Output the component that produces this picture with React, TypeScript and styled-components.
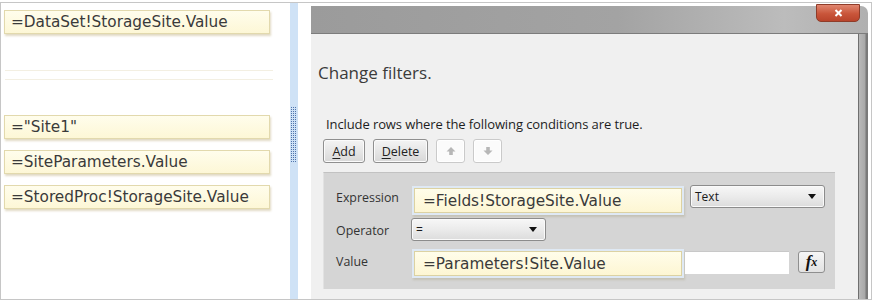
import React from "react";
import styled, { createGlobalStyle } from "styled-components";

const GlobalStyle = createGlobalStyle`
  html, body {
    margin: 0;
    padding: 0;
    background: #ffffff;
  }
  body {
    font-family: "Open Sans", "DejaVu Sans", sans-serif;
  }
`;

const Frame = styled.div`
  display: flex;
  width: 870px;
  height: 296px;
  margin-top: 2px;
  border: 1px solid #c6c6c6;
  background: #ffffff;
  overflow: hidden;
`;

/* ---------- left list of expressions ---------- */

const ListPanel = styled.div`
  display: flex;
  flex-direction: column;
  width: 289px;
  padding: 7px 0 0 3px;
  box-sizing: border-box;
`;

const ExprBox = styled.div<{ $gap?: number }>`
  display: flex;
  align-items: center;
  width: 266px;
  height: 24px;
  margin-top: ${(p) => p.$gap ?? 0}px;
  padding-left: 6px;
  box-sizing: border-box;
  background: linear-gradient(#fffdec, #fdf7d6);
  border: 1px solid #e2d9ad;
  box-shadow: 1px 2px 2px rgba(170, 150, 90, 0.35);
  font-family: "DejaVu Sans", sans-serif;
  font-size: 15.3px;
  color: #3a3a3a;
  white-space: nowrap;
`;

const BlankSlot = styled.div<{ $edge: "top" | "bottom"; $gap: number }>`
  width: 268px;
  height: 34px;
  margin-top: ${(p) => p.$gap}px;
  margin-left: 1px;
  border-${(p) => p.$edge}: 1px solid #f3efe2;
`;

/* ---------- splitter ---------- */

const Splitter = styled.div`
  display: flex;
  flex-direction: column;
  width: 8px;
  background: #cfe2f6;
`;

const Grip = styled.div`
  width: 6px;
  height: 56px;
  margin: 104px 0 0 1px;
  background:
    linear-gradient(90deg, transparent 50%, #cfe2f6 50%) 0 0 / 2px 2px,
    linear-gradient(#4f74ac 50%, #cfe2f6 50%) 0 0 / 2px 2px;
`;

const Gutter = styled.div`
  width: 13px;
`;

/* ---------- dialog ---------- */

const Dialog = styled.div`
  position: relative;
  display: flex;
  flex-direction: column;
  width: 557px;
  margin-top: 3px;
`;

const TitleBar = styled.div`
  height: 28px;
  box-sizing: border-box;
  background: linear-gradient(to right, #9b9b9b 0%, #a3a3a3 55%, #bcbcbc 85%, #b0b0b0 100%);
  border-bottom: 1px solid #7c7c7c;
  border-top-right-radius: 7px;
`;

const CloseButton = styled.div`
  position: absolute;
  top: -2px;
  right: 8px;
  display: flex;
  align-items: center;
  justify-content: center;
  width: 44px;
  height: 18px;
  box-sizing: border-box;
  background: linear-gradient(#e0866f, #c9553a 55%, #b9442b);
  border: 1px solid #8f3c29;
  border-radius: 0 0 5px 5px;
`;

const DialogMain = styled.div`
  display: flex;
  flex: 1;
`;

const DialogBody = styled.div`
  display: flex;
  flex-direction: column;
  flex: 1;
  background: #f0f0f0;
`;

const WindowEdge = styled.div`
  width: 10px;
  background: linear-gradient(
    to right,
    #6f6f6f 0,
    #6f6f6f 1px,
    #b9b9b9 1px,
    #a8a8a8 70%,
    #7a7a7a 80%,
    #7a7a7a 100%
  );
`;

const Heading = styled.div`
  margin: 28px 0 0 7px;
  font-size: 17px;
  line-height: 22px;
  color: #3b3b3b;
`;

const Hint = styled.div`
  margin: 32px 0 0 15px;
  font-size: 13px;
  line-height: 16px;
  letter-spacing: -0.1px;
  color: #1e1e1e;
`;

const Toolbar = styled.div`
  display: flex;
  gap: 8px;
  margin: 7px 0 0 12px;
`;

const ToolButton = styled.div<{ $w: number; $disabled?: boolean }>`
  display: flex;
  align-items: center;
  justify-content: center;
  width: ${(p) => p.$w}px;
  height: 24px;
  box-sizing: border-box;
  border-radius: 3px;
  font-size: 12.5px;
  color: #222;
  border: 1px solid ${(p) => (p.$disabled ? "#cacaca" : "#8f8f8f")};
  background: ${(p) =>
    p.$disabled ? "#fbfbfb" : "linear-gradient(#f4f4f4, #e6e6e6 50%, #d8d8d8)"};
  box-shadow: inset 0 0 0 1px ${(p) => (p.$disabled ? "#ffffff" : "#fbfbfb")};
  u {
    text-decoration: underline;
    text-underline-offset: 2px;
  }
`;

const FilterPanel = styled.div`
  display: flex;
  flex-direction: column;
  height: 117px;
  margin: 9px 23px 0 12px;
  padding: 12px 0 0 12px;
  box-sizing: border-box;
  background: #d5d5d5;
  border-top: 1px solid #c2c2c2;
  border-left: 1px solid #e2e2e2;
`;

const FilterRow = styled.div<{ $h: number; $gap?: number }>`
  display: flex;
  align-items: flex-start;
  height: ${(p) => p.$h}px;
  margin-top: ${(p) => p.$gap ?? 0}px;
`;

const Label = styled.div<{ $top: number }>`
  width: 75px;
  padding-top: ${(p) => p.$top}px;
  font-size: 12.4px;
  color: #333;
`;

const YellowInput = styled.div`
  display: flex;
  align-items: center;
  width: 268px;
  height: 25px;
  margin: 3px 0 0 3px;
  padding-left: 8px;
  box-sizing: border-box;
  background: linear-gradient(#fffdea, #fdf6d3);
  border: 1px solid #dcd2a3;
  box-shadow: 0 0 0 2px #dfe9f4, 1px 2px 2px 2px rgba(160, 150, 110, 0.3);
  font-family: "DejaVu Sans", sans-serif;
  font-size: 15.3px;
  color: #3a3a3a;
  white-space: nowrap;
`;

const Select = styled.div<{ $w: number; $ml: number }>`
  display: flex;
  align-items: center;
  justify-content: space-between;
  width: ${(p) => p.$w}px;
  height: 23px;
  margin-left: ${(p) => p.$ml}px;
  padding: 0 8px 0 4px;
  box-sizing: border-box;
  border: 1px solid #8c8c8c;
  border-radius: 3px;
  background: linear-gradient(#f7f7f7, #ebebeb 50%, #dcdcdc);
  box-shadow: inset 0 0 0 1px #fafafa;
  font-size: 12px;
  color: #1a1a1a;
`;

const Caret = styled.span`
  width: 0;
  height: 0;
  border-left: 4px solid transparent;
  border-right: 4px solid transparent;
  border-top: 5px solid #111;
`;

const PlainBox = styled.div`
  width: 104px;
  height: 22px;
  margin: 3px 0 0 3px;
  background: #ffffff;
  border-top: 1px solid #c8c8c8;
`;

const FxButton = styled.div`
  display: flex;
  align-items: center;
  justify-content: center;
  width: 27px;
  height: 22px;
  margin: 3px 0 0 9px;
  box-sizing: border-box;
  border: 1px solid #8f8f8f;
  border-radius: 3px;
  background: linear-gradient(#f6f6f6, #e2e2e2);
  font-family: "Liberation Serif", serif;
  font-style: italic;
  font-weight: bold;
  font-size: 17px;
  color: #111;
  small {
    font-size: 12px;
  }
`;

const Arrow = ({ down }: { down?: boolean }) => (
  <svg width="10" height="10" viewBox="0 0 10 10">
    <path
      d="M5 1 L9.5 5.5 L6.8 5.5 L6.8 9 L3.2 9 L3.2 5.5 L0.5 5.5 Z"
      fill="#b7b7b7"
      transform={down ? "rotate(180 5 5)" : undefined}
    />
  </svg>
);

const CloseGlyph = () => (
  <svg width="9" height="8" viewBox="0 0 9 8">
    <path d="M1.5 1 L7.5 7 M7.5 1 L1.5 7" stroke="#ffffff" strokeWidth="2" />
  </svg>
);

export default function App() {
  return (
    <>
      <GlobalStyle />
      <Frame>
        <ListPanel>
          <ExprBox>=DataSet!StorageSite.Value</ExprBox>
          <BlankSlot $edge="bottom" $gap={2} />
          <BlankSlot $edge="top" $gap={8} />
          <ExprBox $gap={1}>="Site1"</ExprBox>
          <ExprBox $gap={11}>=SiteParameters.Value</ExprBox>
          <ExprBox $gap={11}>=StoredProc!StorageSite.Value</ExprBox>
        </ListPanel>

        <Splitter>
          <Grip />
        </Splitter>
        <Gutter />

        <Dialog>
          <TitleBar />
          <CloseButton>
            <CloseGlyph />
          </CloseButton>
          <DialogMain>
            <DialogBody>
              <Heading>Change filters.</Heading>
              <Hint>Include rows where the following conditions are true.</Hint>
              <Toolbar>
                <ToolButton $w={42}>
                  <span>
                    <u>A</u>dd
                  </span>
                </ToolButton>
                <ToolButton $w={55}>
                  <span>
                    <u>D</u>elete
                  </span>
                </ToolButton>
                <ToolButton $w={29} $disabled>
                  <Arrow />
                </ToolButton>
                <ToolButton $w={29} $disabled>
                  <Arrow down />
                </ToolButton>
              </Toolbar>
              <FilterPanel>
                <FilterRow $h={30}>
                  <Label $top={4}>Expression</Label>
                  <YellowInput>=Fields!StorageSite.Value</YellowInput>
                  <Select $w={135} $ml={8}>
                    <span>Text</span>
                    <Caret />
                  </Select>
                </FilterRow>
                <FilterRow $h={24} $gap={3}>
                  <Label $top={4}>Operator</Label>
                  <Select $w={135} $ml={0}>
                    <span>=</span>
                    <Caret />
                  </Select>
                </FilterRow>
                <FilterRow $h={30} $gap={6}>
                  <Label $top={5}>Value</Label>
                  <YellowInput>=Parameters!Site.Value</YellowInput>
                  <PlainBox />
                  <FxButton>
                    f<small>x</small>
                  </FxButton>
                </FilterRow>
              </FilterPanel>
            </DialogBody>
            <WindowEdge />
          </DialogMain>
        </Dialog>
      </Frame>
    </>
  );
}
